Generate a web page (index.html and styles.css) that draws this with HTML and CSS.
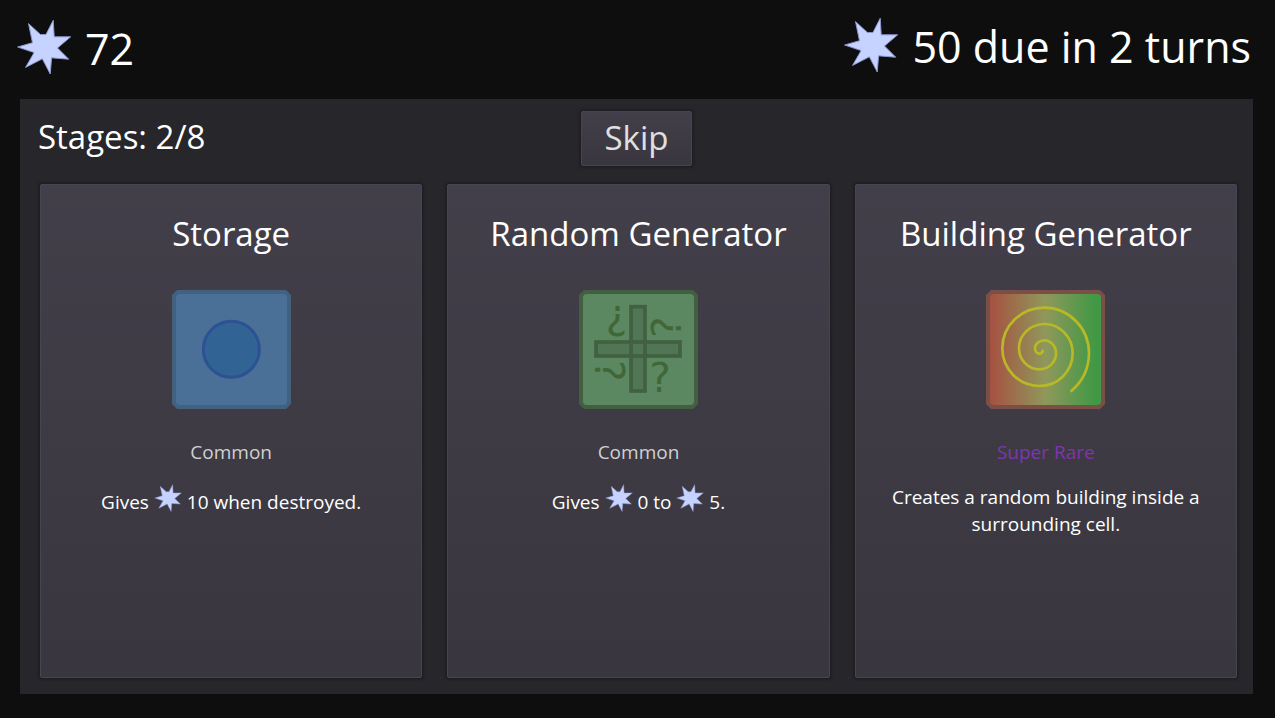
FILE: index.html
```
<!DOCTYPE html>
<html lang="en">
<head>
<meta charset="utf-8">
<meta name="viewport" content="width=device-width, initial-scale=1">
<title>Stage selection</title>
<link rel="stylesheet" href="styles.css">
</head>
<body>
<svg class="defs" aria-hidden="true">
  <symbol id="star" viewBox="48 56 168 170">
    <path class="star-shape" d="M160 60 163 110 213 110 173 144 207 178 155 174 151 223 127 177 76 203 102 158 52 141 97 128 85 70 121 103H138Z"/>
  </symbol>
</svg>
<header class="topbar">
  <div class="coins"><svg class="star-big"><use href="#star"/></svg><span>72</span></div>
  <div class="coins due"><svg class="star-big"><use href="#star"/></svg><span>50 due in 2 turns</span></div>
</header>
<main class="panel">
  <div class="toolbar">
    <span class="stages">Stages: 2/8</span>
    <button class="skip" type="button">Skip</button>
  </div>
  <div class="cards">
    <button class="card" type="button">
      <span class="title">Storage</span>
      <svg class="tile" viewBox="0 0 357 357">
        <path fill="#41617f" d="M15 0H342L357 15V342L342 357H15L0 342V15Z"/>
        <rect x="12" y="12" width="333" height="333" rx="12" fill="#4a7097"/>
        <circle cx="178" cy="178" r="84" fill="#316394" stroke="#2e5193" stroke-width="9"/>
      </svg>
      <span class="rarity">Common</span>
      <span class="text">Gives <svg class="star-small"><use href="#star"/></svg> 10 when destroyed.</span>
    </button>
    <button class="card" type="button">
      <span class="title">Random Generator</span>
      <svg class="tile" viewBox="0 0 357 357">
        <path fill="#435f42" d="M15 0H342L357 15V342L342 357H15L0 342V15Z"/>
        <rect x="12" y="12" width="333" height="333" rx="12" fill="#5c8861"/>
        <g fill="#507656" stroke="#416140" stroke-width="11">
          <rect x="156" y="50" width="42" height="253"/>
          <rect x="51" y="156" width="252" height="42"/>
          <path fill="none" d="M156 151V203M198 151V203"/>
        </g>
        <g class="marks">
          <text x="211" y="306">?</text>
          <text x="211" y="306" transform="rotate(90 178 177)">?</text>
          <text x="211" y="306" transform="rotate(180 178 177)">?</text>
          <text x="211" y="306" transform="rotate(270 178 177)">?</text>
        </g>
      </svg>
      <span class="rarity">Common</span>
      <span class="text">Gives <svg class="star-small"><use href="#star"/></svg> 0 to <svg class="star-small"><use href="#star"/></svg> 5.</span>
    </button>
    <button class="card" type="button">
      <span class="title">Building Generator</span>
      <svg class="tile" viewBox="0 0 357 357">
        <defs>
          <linearGradient id="blend">
            <stop offset="0" stop-color="#a65141"/>
            <stop offset=".5" stop-color="#8f985b"/>
            <stop offset=".95" stop-color="#419845"/>
          </linearGradient>
        </defs>
        <path fill="#794f47" d="M15 0H342L357 15V342L342 357H15L0 342V15Z"/>
        <rect x="12" y="12" width="333" height="333" rx="12" fill="url(#blend)"/>
        <path fill="none" stroke="#b9b927" stroke-width="8" stroke-linecap="round" d="M170 182A10 10 0 0 1 160 191A13 16 0 0 1 147 175A28 24 0 0 1 175 151A35 39 0 0 1 210 190A50 48 0 0 1 160 238A61 63 0 0 1 99 175A76 73 0 0 1 175 102A85 88 0 0 1 260 190A100 98 0 0 1 160 288A111 113 0 0 1 49 175A126 122 0 0 1 175 53A134 137 0 0 1 309 190A150 150 0 0 1 256 303"/>
      </svg>
      <span class="rarity super">Super Rare</span>
      <span class="text">Creates a random building inside a surrounding cell.</span>
    </button>
  </div>
</main>
</body>
</html>
```
FILE: styles.css
```
* { box-sizing: border-box; }
body {
  margin: 0;
  min-height: 100vh;
  display: flex;
  flex-direction: column;
  padding: 0 22px 24px 20px;
  background: #0e0e0e;
  color: #fff;
  font-family: "Open Sans", "Noto Sans", sans-serif;
}
.defs { display: none; }
.topbar {
  height: 99px;
  display: flex;
  justify-content: space-between;
  margin: 0 2px 0 -4px;
}
.coins {
  display: flex;
  align-items: flex-start;
  gap: 13px;
  padding-top: 19px;
  font-size: 43px;
  line-height: 60px;
}
.due { padding-top: 17px; }
.star-big { width: 56px; height: 56px; }
.star-shape { fill: #c6d2ff; stroke: #8c98cf; stroke-width: 3; stroke-linejoin: round; }
.panel {
  flex: 1;
  display: flex;
  flex-direction: column;
  gap: 18px;
  padding: 12px 16px 16px 20px;
  background: #27262a;
}
.toolbar {
  display: grid;
  grid-template-columns: 1fr auto 1fr;
  align-items: center;
  padding-right: 4px;
  font-size: 33px;
  line-height: 46px;
}
.stages { margin: -4px 0 0 -2px; }
.skip, .card {
  font-family: inherit;
  color: inherit;
  border: 1px solid #47454f;
  border-radius: 2px;
  background: linear-gradient(#423f4a, #39363f);
  box-shadow: 0 0 3px 1px #1b1a1e;
}
.skip {
  padding: 3px 23px 4px;
  font-size: 33px;
  line-height: 46px;
  color: #e0e0e0;
}
.cards {
  flex: 1;
  display: grid;
  grid-template-columns: repeat(3, 1fr);
  gap: 25px;
}
.card {
  display: flex;
  flex-direction: column;
  align-items: center;
  justify-content: flex-start;
  padding: 26px 24px;
  font-size: 19px;
  line-height: 27px;
}
.title { font-size: 33px; line-height: 46px; }
.tile { width: 119px; height: 119px; margin: 33px 0 30px; }
.marks { fill: #416738; font-family: "DejaVu Sans", sans-serif; font-size: 122px; }
.rarity { color: #d0d0d0; }
.super { color: #7f35ad; }
.text { margin-top: 18px; }
.star-small { width: 28px; height: 28px; vertical-align: -3px; }
```
